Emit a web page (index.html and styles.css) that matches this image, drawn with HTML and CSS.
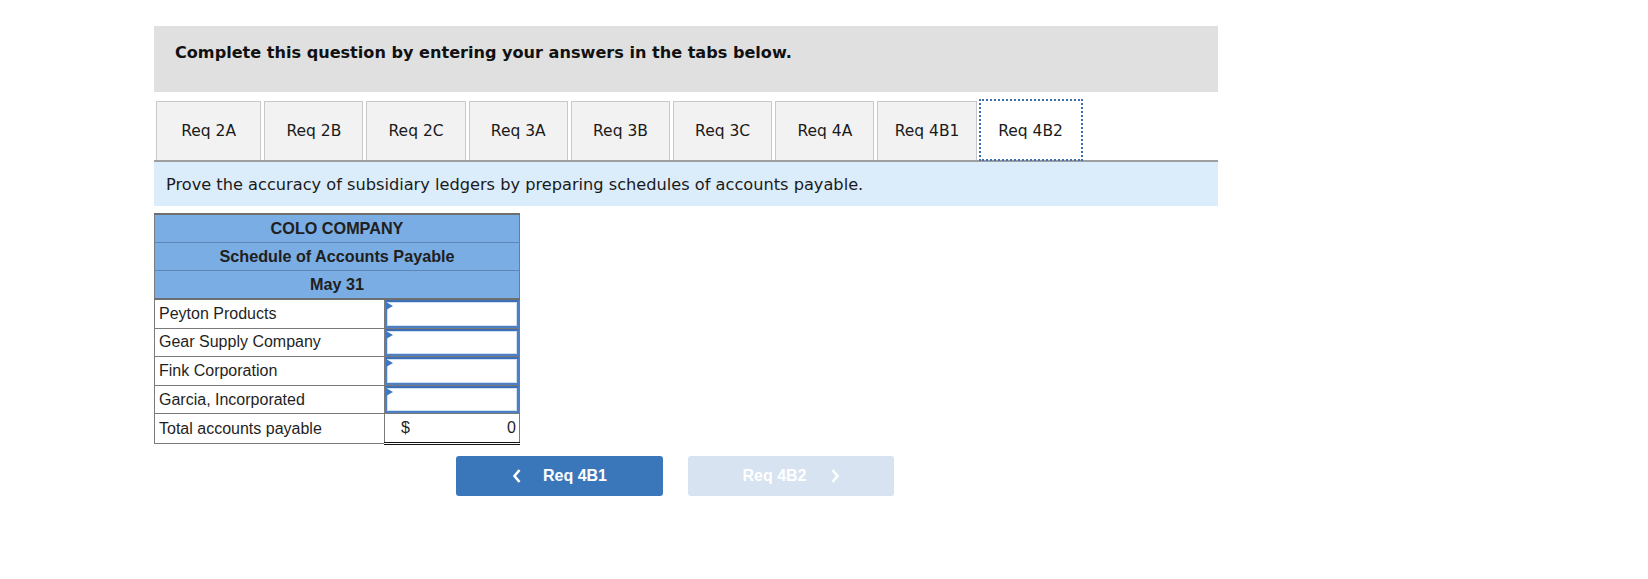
FILE: index.html
```html
<!DOCTYPE html>
<html>
<head>
<meta charset="utf-8">
<link rel="stylesheet" href="styles.css">
</head>
<body>
<div class="wrap">
  <div class="instr">Complete this question by entering your answers in the tabs below.</div>
  <ul class="tabs">
    <li class="tab first">Req 2A</li>
    <li class="tab">Req 2B</li>
    <li class="tab">Req 2C</li>
    <li class="tab">Req 3A</li>
    <li class="tab">Req 3B</li>
    <li class="tab">Req 3C</li>
    <li class="tab">Req 4A</li>
    <li class="tab">Req 4B1</li>
    <li class="tab active">Req 4B2</li>
  </ul>
  <div class="desc">Prove the accuracy of subsidiary ledgers by preparing schedules of accounts payable.</div>
  <table class="sched">
    <tr class="hd"><th colspan="2">COLO COMPANY</th></tr>
    <tr class="hd"><th colspan="2">Schedule of Accounts Payable</th></tr>
    <tr class="hd last"><th colspan="2">May 31</th></tr>
    <tr><td class="lbl">Peyton Products</td><td class="val"><div class="inp"><span class="tri"></span></div></td></tr>
    <tr><td class="lbl">Gear Supply Company</td><td class="val"><div class="inp"><span class="tri"></span></div></td></tr>
    <tr><td class="lbl">Fink Corporation</td><td class="val"><div class="inp"><span class="tri"></span></div></td></tr>
    <tr><td class="lbl">Garcia, Incorporated</td><td class="val"><div class="inp"><span class="tri"></span></div></td></tr>
    <tr class="tot"><td class="lbl">Total accounts payable</td><td class="val total"><span class="dollar">$</span><span class="num">0</span></td></tr>
  </table>
  <div class="nav">
    <button class="btn prev"><svg class="chev" width="10" height="16" viewBox="0 0 10 16"><path d="M7.5 2 L2.5 8 L7.5 14" fill="none" stroke="#fff" stroke-width="2.6"/></svg><span>Req 4B1</span></button>
    <button class="btn next"><span>Req 4B2</span><svg class="chev" width="10" height="16" viewBox="0 0 10 16"><path d="M2.5 2 L7.5 8 L2.5 14" fill="none" stroke="#fff" stroke-width="2.6"/></svg></button>
  </div>
</div>
</body>
</html>
```
FILE: styles.css
```css
html, body { margin: 0; padding: 0; background: #fff; }
.wrap {
  margin-left: 154px;
  width: 1064px;
  padding-top: 26px;
  font-family: "DejaVu Sans", Verdana, sans-serif;
  color: #1a1a1a;
}
.instr {
  background: #e0e0e0;
  height: 66px;
  box-sizing: border-box;
  padding: 17px 0 0 21px;
  font-weight: bold;
  font-size: 16.1px;
  line-height: 20px;
  color: #111;
}
.tabs {
  list-style: none;
  margin: 9px 0 0 2px;
  padding: 0;
  display: flex;
  gap: 3px;
  height: 59px;
}
.tab {
  box-sizing: border-box;
  width: 99.2px;
  flex: none;
  height: 59px;
  background: #f2f2f2;
  border: 1px solid #c9c9c9;
  border-bottom: none;
  display: flex;
  align-items: center;
  justify-content: center;
  font-size: 15.5px;
  color: #1a1a1a;
}
.tab.first { width: 105.3px; }
.tab.active {
  background: #fff;
  border-color: transparent;
  outline: 2px dotted #3d6fb3;
  outline-offset: -1px;
  position: relative;
  z-index: 1;
  height: 60px;
  margin-top: -1px;
  width: 102px;
}
.desc {
  background: #dbecfa;
  border-top: 2px solid #9e9e9e;
  height: 44px;
  box-sizing: content-box;
  display: flex;
  align-items: center;
  padding-left: 12px;
  font-size: 16.2px;
  color: #1a1a1a;
}
.sched {
  margin-top: 7px;
  border-collapse: collapse;
  width: 366px;
  font-family: "Liberation Sans", Arial, sans-serif;
  font-size: 16px;
  color: #1f1f1f;
  border-top: 2px solid #6e6e6e;
}
.sched th {
  background: #7aade3;
  height: 27px;
  padding: 0;
  font-weight: bold;
  font-size: 16.2px;
  color: #202020;
  text-align: center;
  border-bottom: 1px solid #5f86b6;
  border-left: 1px solid #7a7a7a;
  border-right: 1px solid #7a7a7a;
}
.sched .hd.last th { border-bottom: 2px solid #6e6e6e; }
.sched td {
  height: 27.6px;
  padding: 0;
  border-bottom: 1px solid #7a7a7a;
}
.sched .lbl {
  width: 226px;
  padding-left: 4px;
  border-left: 1px solid #7a7a7a;
}
.sched .val {
  width: 135px;
  border-left: 1px solid #7a7a7a;
  border-right: 1px solid #7a7a7a;
  vertical-align: top;
}
.inp {
  position: relative;
  box-sizing: border-box;
  height: 27.6px;
  border: 2px solid #4d7fc2;
  border-top-color: #3c6fb5;
  box-shadow: inset 0 0 0 1px #cfe0f4;
  background: #fff;
}
.tri {
  position: absolute;
  left: -1px;
  top: 0px;
  width: 0;
  height: 0;
  border-top: 4.5px solid transparent;
  border-bottom: 4.5px solid transparent;
  border-left: 7px solid #3d78c6;
}
.sched .total {
  vertical-align: middle;
  border-bottom: 3px double #111;
}
.dollar { float: left; padding-left: 16px; }
.num { float: right; padding-right: 3px; }
.nav {
  margin: 11px 0 0 302px;
  display: flex;
  gap: 25px;
}
.btn {
  width: 207px;
  height: 40px;
  border: none;
  border-radius: 3px;
  font-family: "Liberation Sans", Arial, sans-serif;
  font-weight: bold;
  font-size: 16px;
  color: #fff;
  display: flex;
  align-items: center;
  justify-content: center;
  gap: 15px;
  padding: 0;
}
.btn.prev { background: #3a77ba; }
.btn.next { background: #d7e3f1; width: 206px; }
.btn.next .chev { margin-left: 8px; }
.btn.prev .chev { margin-right: 6px; }
.chev { display: block; }
```
